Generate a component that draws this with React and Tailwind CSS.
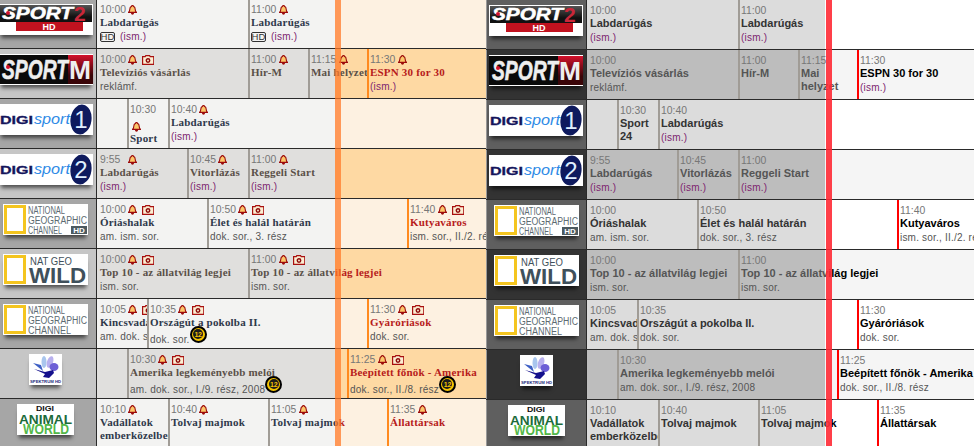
const rows = [
  {
    logo: 'sport2',
    cells: [
      { w: 'w-[151px]', time: '10:00', title: ['Labdarúgás'], sub: '(ism.)', hd: true },
      { time: '11:00', title: ['Labdarúgás'], sub: '(ism.)', hd: true },
    ],
  },
  {
    logo: 'sportm',
    cells: [
      { w: 'w-[151px]', time: '10:00', cam: true, title: ['Televíziós vásárlás'], sub: 'reklámf.' },
      { w: 'w-[60px]', time: '11:00', title: ['Hír-M'] },
      { w: 'w-[59px]', time: '11:15', title: ['Mai helyzet'], oneLine: true },
      { future: true, time: '11:30', title: ['ESPN 30 for 30'], sub: '(ism.)' },
    ],
  },
  {
    logo: 'digi1',
    cells: [
      { w: 'w-[30px]', empty: true },
      { w: 'w-[41px]', time: '10:30', stacked: true, title: ['Sport 24'] },
      { time: '10:40', title: ['Labdarúgás'], sub: '(ism.)' },
    ],
  },
  {
    logo: 'digi2',
    cells: [
      { w: 'w-[90px]', time: '9:55', title: ['Labdarúgás'], sub: '(ism.)' },
      { w: 'w-[61px]', time: '10:45', title: ['Vitorlázás'], sub: '(ism.)' },
      { time: '11:00', title: ['Reggeli Start'], sub: '(ism.)' },
    ],
  },
  {
    logo: 'natgeohd',
    cells: [
      { w: 'w-[110px]', time: '10:00', cam: true, title: ['Óriáshalak'], sub: 'am. ism. sor.' },
      { w: 'w-[200px]', time: '10:50', cam: true, title: ['Élet és halál határán'], sub: 'dok. sor., 3. rész' },
      { future: true, time: '11:40', cam: true, title: ['Kutyaváros'], sub: 'ism. sor., II./2. rész' },
    ],
  },
  {
    logo: 'wild',
    cells: [
      { w: 'w-[151px]', time: '10:00', cam: true, title: ['Top 10 - az állatvilág legjei'], sub: 'ism. sor.' },
      { time: '11:00', cam: true, title: ['Top 10 - az állatv', 'ilág legjei'], sub: 'ism. sor.' },
    ],
  },
  {
    logo: 'natgeo',
    cells: [
      { w: 'w-[50px]', time: '10:05', cam: true, title: ['Kincsvadászok'], sub: 'am. dok. sor.' },
      { w: 'w-[220px]', time: '10:35', cam: true, title: ['Országút a pokolba II.'], sub: 'dok. sor.', badge: true },
      { future: true, time: '11:30', cam: true, title: ['Gyáróriások'], sub: 'dok. sor.' },
    ],
  },
  {
    logo: 'spektrum',
    cells: [
      { w: 'w-[30px]', empty: true },
      { w: 'w-[220px]', time: '10:30', cam: true, title: ['Amerika legkeményebb melói'], sub: 'am. dok. sor., I./9. rész, 2008', badge: true },
      { future: true, time: '11:25', cam: true, title: ['Beépített főnök - Amerika'], sub: 'dok. sor., II./8. rész', badge: true },
    ],
  },
  {
    logo: 'animal',
    cells: [
      { w: 'w-[71px]', time: '10:10', title: ['Vadállatok emberközelben'] },
      { w: 'w-[100px]', time: '10:40', title: ['Tolvaj majmok'] },
      { w: 'w-[119px]', time: '11:05', title: ['Tolvaj majmo', 'k'] },
      { future: true, time: '11:35', title: ['Állattársak'] },
    ],
  },
]

const sans = '"Liberation Sans", Arial, sans-serif'

function Bell() {
  return (
    <svg className="ml-[2px] shrink-0" width="9" height="10" viewBox="0 0 9 10">
      <path
        d="M4.5 .5c.6 0 1 .4 1 .9 1.300.4 1.700 1.600 1.700 2.900 0 1.500.5 2.300 1.300 3.100H.5c.8-.8 1.300-1.600 1.300-3.100 0-1.300.4-2.500 1.700-2.900 0-.5.400-.9 1-.9z"
        fill="#fbc76a"
        stroke="#9c0b0b"
        strokeWidth="1.100"
      />
      <path d="M3 8c0 1 .7 1.700 1.500 1.700S6 9 6 8z" fill="#9c0b0b" />
    </svg>
  )
}

function Camera() {
  return (
    <svg className="ml-[5px] shrink-0" width="12" height="10" viewBox="0 0 12 10">
      <path d="M.6 1.600h2.600l.6-1h3.800l.6 1h3.600v7.800H.6z" fill="#fbeed2" stroke="#a80f0f" strokeWidth="1.200" />
      <circle cx="6" cy="5.500" r="1.700" fill="#fbeed2" stroke="#8f0c0c" strokeWidth="1.500" />
    </svg>
  )
}

function HdChip() {
  return (
    <span className="mr-[5px] flex h-[10px] w-[15px] shrink-0 items-center justify-center rounded-[2px] border border-[#333] text-[9.5px] leading-none text-[#333]">
      HD
    </span>
  )
}

function AgeBadge() {
  return (
    <span className="-mt-[5px] flex h-[17px] w-[17px] shrink-0 items-center justify-center rounded-full border-2 border-black bg-[#f5c400]">
      <span className="flex h-[10px] w-[10px] items-center justify-center rounded-full bg-[#1c1c1c] text-[7px] font-bold leading-none tracking-[-0.3px] text-[#f5c400]">
        12
      </span>
    </span>
  )
}

function LogoSport({ variant, uid }) {
  return (
    <svg width="94" height="31" viewBox="0 0 94 31" fontFamily={sans}>
      <defs>
        <linearGradient id={`mRed${uid}`} x1="0" y1="0" x2="0" y2="1">
          <stop offset="0" stopColor="#d3112c" />
          <stop offset="0.7" stopColor="#3a0508" />
        </linearGradient>
        <linearGradient id={`topBand${uid}`} x1="0" y1="0" x2="0" y2="1">
          <stop offset="0" stopColor="#555" />
          <stop offset="0.7" stopColor="#111" />
        </linearGradient>
      </defs>
      <rect width="94" height="31" fill="#fff" />
      {variant === 'two' ? (
        <>
          <rect x="17" y="16" width="67" height="11" fill="#c1121f" />
          <text x="50" y="26" fontSize="9" fontWeight="700" fill="#fff" textAnchor="middle">HD</text>
          <rect x="1" y="1" width="92" height="17" fill={`url(#topBand${uid})`} />
          <text x="3" y="15" fontSize="17" fontWeight="700" fontStyle="italic" fill="#fff" stroke="#fff" strokeWidth="0.5" textLength="71" lengthAdjust="spacingAndGlyphs">SPORT</text>
          <text x="75" y="17" fontSize="21" fontWeight="700" fill="#c9273a">2</text>
          <circle cx="9" cy="9" r="2" fill="#d3112c" />
        </>
      ) : (
        <>
          <rect x="0" y="1" width="94" height="29" fill="#0a0a0a" />
          <rect x="69" y="1" width="25" height="29" fill={`url(#mRed${uid})`} />
          <text x="3" y="25" fontSize="27" fontWeight="700" fontStyle="italic" fill="#eee" stroke="#eee" strokeWidth="0.6" textLength="66" lengthAdjust="spacingAndGlyphs">SPORT</text>
          <text x="70" y="25" fontSize="25" fontWeight="700" fill="#eee" textLength="22" lengthAdjust="spacingAndGlyphs">M</text>
          <circle cx="9" cy="13" r="2" fill="#d3112c" />
        </>
      )}
    </svg>
  )
}

function LogoDigi({ number }) {
  return (
    <svg width="94" height="31" viewBox="0 0 94 31" fontFamily={sans}>
      <rect width="94" height="31" fill="#fff" />
      <text x="1" y="20" fontSize="11" fontWeight="700" fill="#14145c" stroke="#14145c" strokeWidth="0.3" textLength="33" lengthAdjust="spacingAndGlyphs">DIGI</text>
      <text x="35" y="20" fontSize="15" fontStyle="italic" fill="#2f8be6" textLength="36" lengthAdjust="spacingAndGlyphs">sport</text>
      <ellipse cx="82" cy="15.5" rx="10.500" ry="15" fill="#0e1a5e" transform="rotate(8 82 15.5)" />
      <text x="82" y="24" fontSize="24" fill="#dfefff" textAnchor="middle">{number}</text>
    </svg>
  )
}

function LogoNatGeo({ hd }) {
  return (
    <svg width="85" height="31" viewBox="0 0 85 31" fontFamily={sans}>
      <rect width="85" height="31" fill="#fff" />
      <rect x="2.5" y="2.5" width="19" height="26" fill="#fff" stroke="#f4c51f" strokeWidth="3" />
      <g fill="#5d6b72" fontSize="10">
        <text x="25" y="10" textLength="37" lengthAdjust="spacingAndGlyphs">NATIONAL</text>
        <text x="25" y="20" textLength="59" lengthAdjust="spacingAndGlyphs">GEOGRAPHIC</text>
        <text x="25" y="30" textLength={hd ? 34 : 43} lengthAdjust="spacingAndGlyphs">CHANNEL</text>
      </g>
      {hd && (
        <>
          <rect x="68" y="22" width="16" height="8" fill="#4d5a60" />
          <text x="76" y="29" fontSize="8" fontWeight="700" fill="#fff" textAnchor="middle">HD</text>
        </>
      )}
    </svg>
  )
}

function LogoWild() {
  return (
    <svg width="85" height="31" viewBox="0 0 85 31" fontFamily={sans}>
      <rect width="85" height="31" fill="#fff" />
      <rect x="2.5" y="2.5" width="19" height="26" fill="#fff" stroke="#f4c51f" strokeWidth="3" />
      <text x="27" y="11" fontSize="10" fill="#3f505b" textLength="42" lengthAdjust="spacingAndGlyphs">NAT GEO</text>
      <text x="26" y="29" fontSize="22" fontWeight="700" fill="#3f505b" textLength="57" lengthAdjust="spacingAndGlyphs">WILD</text>
    </svg>
  )
}

function LogoSpektrum() {
  return (
    <svg width="33" height="31" viewBox="0 0 33 31" fontFamily={sans}>
      <rect width="33" height="31" fill="#fff" />
      <ellipse cx="15" cy="8" rx="2.5" ry="6" fill="#a9c6ee" />
      <ellipse cx="21" cy="8" rx="3" ry="6" fill="#b8b0ee" transform="rotate(20 21 8)" />
      <ellipse cx="25" cy="13" rx="4.5" ry="4" fill="#6d5fd6" />
      <path d="M4 9l10 8-2-6z" fill="#3d5fc4" />
      <path d="M5 15l11 3 8-2 1 3-5 5-6-1 2-3z" fill="#14108c" />
      <text x="16.5" y="29" fontSize="4.2" fontWeight="700" fill="#1a2a7a" textAnchor="middle" textLength="31" lengthAdjust="spacingAndGlyphs">SPEKTRUM HD</text>
    </svg>
  )
}

function LogoAnimal() {
  return (
    <svg width="57" height="31" viewBox="0 0 57 31" fontFamily={sans}>
      <rect width="57" height="31" fill="#fff" />
      <text x="28" y="7" fontSize="7" fontWeight="700" fill="#111" textAnchor="middle" textLength="18" lengthAdjust="spacingAndGlyphs">DIGI</text>
      <text x="29" y="30" fontSize="14" fontWeight="700" fill="#52b748" textAnchor="middle" textLength="46" lengthAdjust="spacingAndGlyphs">WORLD</text>
      <text x="28.5" y="20" fontSize="13" fontWeight="700" fill="#1c6b3a" textAnchor="middle" textLength="53" lengthAdjust="spacingAndGlyphs">ANIMAL</text>
    </svg>
  )
}

function Logo({ name, uid }) {
  if (name === 'sport2') return <LogoSport variant="two" uid={uid} />
  if (name === 'sportm') return <LogoSport variant="m" uid={uid} />
  if (name === 'digi1') return <LogoDigi number="1" />
  if (name === 'digi2') return <LogoDigi number="2" />
  if (name === 'natgeohd') return <LogoNatGeo hd />
  if (name === 'natgeo') return <LogoNatGeo />
  if (name === 'wild') return <LogoWild />
  if (name === 'spektrum') return <LogoSpektrum />
  return <LogoAnimal />
}

function Cell({ cell, dark, first, isLeft }) {
  const width = cell.w || 'flex-1 min-w-0'

  if (cell.empty) return <div className={`${width} shrink-0`} />

  let borderClass = ''
  if (!first) {
    if (cell.future) {
      borderClass = isLeft ? 'border-l-2 border-[#ff8a1e] pl-px' : 'border-l-2 border-[#f00] pl-px'
    } else {
      borderClass = 'border-l-2 border-[#a09c96] pl-px'
    }
  } else {
    borderClass = 'pl-[3px]'
  }

  let titlePast = isLeft ? 'text-[#2f394b]' : 'text-[#333]'
  if (dark) titlePast = isLeft ? 'text-[#5a5048]' : 'text-[#555]'
  const titleFuture = isLeft ? 'text-[#b71c1c]' : 'text-black'
  const titleClass = cell.future ? titleFuture : titlePast
  const fontClass = isLeft
    ? 'font-["Liberation_Serif",serif] tracking-[0.2px] text-[11px]'
    : 'font-["Liberation_Sans",Arial,sans-serif] text-[11px]'

  return (
    <div className={`${width} relative shrink-0 overflow-hidden pt-[5px] ${borderClass}`}>
      <div className="flex h-[12px] items-center">
        <span className="w-[26px] shrink-0 text-[10.4px] leading-none text-[#777]">{cell.time}</span>
        {isLeft && !cell.stacked && <Bell />}
        {isLeft && cell.cam && <Camera />}
      </div>
      {isLeft && cell.stacked && (
        <div className="flex h-[16px] items-end">
          <Bell />
        </div>
      )}
      <div className={`${fontClass} font-bold leading-[13px] ${titleClass} ${isLeft && cell.oneLine ? 'whitespace-nowrap' : ''}`}>
        {cell.title[0]}
        {cell.title[1] && <span className={titleFuture}>{cell.title[1]}</span>}
      </div>
      {cell.sub && (
        <div className="mt-px flex h-[13px] items-center whitespace-nowrap text-[10px] leading-[13px] tracking-[0.2px] text-[#555]">
          {isLeft && cell.hd && <HdChip />}
          <span className={`${cell.sub === '(ism.)' ? 'text-[#7d1f6f]' : ''} ${isLeft && cell.badge ? 'mt-[5px]' : ''}`}>
            {cell.sub}
          </span>
          {isLeft && cell.badge && <AgeBadge />}
        </div>
      )}
    </div>
  )
}

function Row({ row, index, isLeft }) {
  const dark = index % 2 === 1
  let sidebar = dark ? 'bg-[#333] border-l border-l-[#999]' : 'bg-[#5f5f5f] border-l border-l-[#999]'
  let past = dark ? 'bg-[#bdbdbd]' : 'bg-[#dcdcdc]'
  let future = dark ? 'bg-[#f5f5f5]' : 'bg-white'
  if (isLeft) {
    sidebar = dark ? 'bg-[#c6c6c6]' : 'bg-[#a6a6a6]'
    past = dark ? 'bg-[#e0dfdd]' : 'bg-[#f3f3f2]'
    future = dark ? 'bg-[#fed9a3]' : 'bg-[#fdf1e1]'
  }

  return (
    <div className="flex h-[50px] shrink-0 border-b border-[#2a2a2a]">
      <div className={`flex w-[101px] shrink-0 justify-center border-r border-r-[#2a2a2a] pr-px pt-[5px] ${sidebar}`}>
        <div className="h-[31px] shadow-[0_5px_4px_-2px_rgba(0,0,0,0.6)]">
          <Logo name={row.logo} uid={isLeft ? 'L' : 'R'} />
        </div>
      </div>
      <div className="relative flex min-w-0 flex-1">
        <div className="absolute inset-0 flex">
          <div className={`w-[238px] shrink-0 ${past}`} />
          <div className={`flex-1 ${future}`} />
        </div>
        {row.cells.map((cell, i) => (
          <Cell cell={cell} dark={dark} first={i === 0} isLeft={isLeft} key={i} />
        ))}
      </div>
    </div>
  )
}

function Panel({ isLeft }) {
  return (
    <div className={`relative shrink-0 overflow-hidden ${isLeft ? '-ml-1 w-[490px]' : 'w-[488px]'}`}>
      <div className={`flex flex-col ${isLeft ? '-mt-px' : ''}`}>
        {rows.map((row, i) => (
          <Row row={row} index={i} isLeft={isLeft} key={row.logo} />
        ))}
      </div>
      <div
        className={`absolute inset-y-0 w-[6px] ${
          isLeft ? 'left-[339px] bg-[#ff7a2a]/75' : 'left-[340px] bg-[#ff2a35]/90'
        }`}
      />
    </div>
  )
}

export default function App() {
  return (
    <div className="flex h-[446px] w-[974px] overflow-hidden bg-white font-['Liberation_Sans',Arial,sans-serif]">
      <Panel isLeft />
      <Panel />
    </div>
  )
}
